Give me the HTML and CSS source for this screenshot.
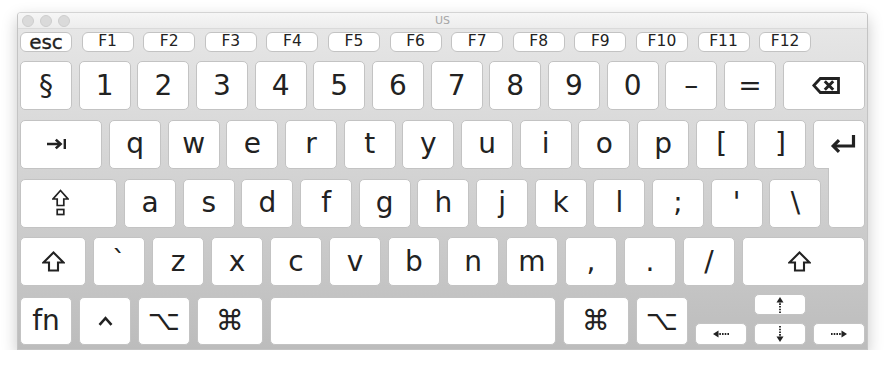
FILE: index.html
```html
<!DOCTYPE html>
<html lang="en">
<head>
    <meta charset="UTF-8">
    <title>US</title>
    <link rel="stylesheet" href="styles.css">
</head>
<body>
    <div class="window">
        <div class="titlebar">
            <div class="lights"><span></span><span></span><span></span></div>
            <div class="title">US</div>
            <div></div>
        </div>

        <div class="board">
            <!-- function keys -->
            <div class="frow">
                <div class="key fkey esc">esc</div>
                <div class="key fkey">F1</div>
                <div class="key fkey">F2</div>
                <div class="key fkey">F3</div>
                <div class="key fkey">F4</div>
                <div class="key fkey">F5</div>
                <div class="key fkey">F6</div>
                <div class="key fkey">F7</div>
                <div class="key fkey">F8</div>
                <div class="key fkey">F9</div>
                <div class="key fkey">F10</div>
                <div class="key fkey">F11</div>
                <div class="key fkey">F12</div>
            </div>

            <div class="rows">
                <div class="row">
                    <div class="key">§</div>
                    <div class="key">1</div>
                    <div class="key">2</div>
                    <div class="key">3</div>
                    <div class="key">4</div>
                    <div class="key">5</div>
                    <div class="key">6</div>
                    <div class="key">7</div>
                    <div class="key">8</div>
                    <div class="key">9</div>
                    <div class="key">0</div>
                    <div class="key">–</div>
                    <div class="key">=</div>
                    <div class="key grow del">
                        <svg width="28" height="17" viewBox="0 0 28 17">
                            <path d="M1.8 8.5 L8.3 1.5 H26.5 V15.5 H8.3 Z" fill="none" stroke="#222" stroke-width="2.8" stroke-linejoin="miter"/>
                            <path d="M12.8 4.3 L21.2 12.7 M21.2 4.3 L12.8 12.7" stroke="#222" stroke-width="3"/>
                        </svg>
                    </div>
                </div>

                <div class="row">
                    <div class="key grow tab">
                        <svg width="21" height="12" viewBox="0 0 21 12">
                            <path d="M1 6 H14" stroke="#222" stroke-width="2.4"/>
                            <path d="M9.8 1.6 L14.6 6 L9.8 10.4" fill="none" stroke="#222" stroke-width="2.6"/>
                            <rect x="17.6" y="1" width="2.4" height="10" fill="#222"/>
                        </svg>
                    </div>
                    <div class="key">q</div>
                    <div class="key">w</div>
                    <div class="key">e</div>
                    <div class="key">r</div>
                    <div class="key">t</div>
                    <div class="key">y</div>
                    <div class="key">u</div>
                    <div class="key">i</div>
                    <div class="key">o</div>
                    <div class="key">p</div>
                    <div class="key">[</div>
                    <div class="key">]</div>
                    <div class="key ret-top">
                        <svg width="27" height="20" viewBox="0 0 27 20">
                            <path d="M24.5 1 V12 H5" fill="none" stroke="#222" stroke-width="3.2"/>
                            <path d="M10 6.2 L4.2 12 L10 17.8" fill="none" stroke="#222" stroke-width="3.2"/>
                        </svg>
                    </div>
                </div>

                <div class="row">
                    <div class="key grow caps">
                        <svg width="17" height="28" viewBox="0 0 17 28">
                            <path d="M8.5 1.5 L16 10 H11.8 V16.5 H5.2 V10 H1 Z" fill="none" stroke="#222" stroke-width="1.7" stroke-linejoin="miter"/>
                            <rect x="5.2" y="20.5" width="6.6" height="5" fill="none" stroke="#222" stroke-width="1.7"/>
                        </svg>
                    </div>
                    <div class="key">a</div>
                    <div class="key">s</div>
                    <div class="key">d</div>
                    <div class="key">f</div>
                    <div class="key">g</div>
                    <div class="key">h</div>
                    <div class="key">j</div>
                    <div class="key">k</div>
                    <div class="key">l</div>
                    <div class="key">;</div>
                    <div class="key">'</div>
                    <div class="key">\</div>
                    <div class="key ret-bottom"></div>
                </div>

                <div class="row shift-row">
                    <div class="key lshift">
                        <svg width="23" height="21" viewBox="0 0 23 21">
                            <path d="M11.5 1.5 L21.5 11.5 H16 V19.5 H7 V11.5 H1.5 Z" fill="none" stroke="#222" stroke-width="2.1" stroke-linejoin="miter"/>
                        </svg>
                    </div>
                    <div class="key">`</div>
                    <div class="key">z</div>
                    <div class="key">x</div>
                    <div class="key">c</div>
                    <div class="key">v</div>
                    <div class="key">b</div>
                    <div class="key">n</div>
                    <div class="key">m</div>
                    <div class="key">,</div>
                    <div class="key">.</div>
                    <div class="key">/</div>
                    <div class="key grow rshift">
                        <svg width="23" height="21" viewBox="0 0 23 21">
                            <path d="M11.5 1.5 L21.5 11.5 H16 V19.5 H7 V11.5 H1.5 Z" fill="none" stroke="#222" stroke-width="2.1" stroke-linejoin="miter"/>
                        </svg>
                    </div>
                </div>

                <div class="row bottom-row">
                    <div class="key">fn</div>
                    <div class="key">
                        <svg width="15" height="10" viewBox="0 0 15 10">
                            <path d="M1.5 8.8 L7.5 2.2 L13.5 8.8" fill="none" stroke="#222" stroke-width="2.6"/>
                        </svg>
                    </div>
                    <div class="key sym">⌥</div>
                    <div class="key cmd sym">⌘</div>
                    <div class="key grow"></div>
                    <div class="key cmd sym">⌘</div>
                    <div class="key sym">⌥</div>
                    <div class="key arrow">
                        <svg width="16" height="8" viewBox="0 0 16 8">
                            <path d="M16 4 H5" stroke="#222" stroke-width="1.8" stroke-dasharray="1.6 1.1"/>
                            <path d="M0 4 L5.5 0.5 V7.5 Z" fill="#222"/>
                        </svg>
                    </div>
                    <div class="arrows-mid">
                        <div class="key arrow">
                            <svg width="8" height="16" viewBox="0 0 8 16">
                                <path d="M4 16 V5" stroke="#222" stroke-width="1.8" stroke-dasharray="1.6 1.1"/>
                                <path d="M4 0 L7.5 5.5 H0.5 Z" fill="#222"/>
                            </svg>
                        </div>
                        <div class="key arrow">
                            <svg width="8" height="16" viewBox="0 0 8 16">
                                <path d="M4 0 V11" stroke="#222" stroke-width="1.8" stroke-dasharray="1.6 1.1"/>
                                <path d="M4 16 L7.5 10.5 H0.5 Z" fill="#222"/>
                            </svg>
                        </div>
                    </div>
                    <div class="key arrow">
                        <svg width="16" height="8" viewBox="0 0 16 8">
                            <path d="M0 4 H11" stroke="#222" stroke-width="1.8" stroke-dasharray="1.6 1.1"/>
                            <path d="M16 4 L10.5 0.5 V7.5 Z" fill="#222"/>
                        </svg>
                    </div>
                </div>
            </div>
        </div>
    </div>
</body>
</html>
```

FILE: styles.css
```css
body {
    margin: 0;
    background-color: #fff;
    font-family: "DejaVu Sans", sans-serif;
    color: #222;
}

.window {
    width: 851px;
    height: 338px;
    margin: 12px 0 0 17px;
    box-sizing: border-box;
    border: 1px solid #c4c4c4;
    border-top-color: #d4d4d4;
    border-radius: 4px 4px 0 0;
    box-shadow: 0 6px 16px rgba(0, 0, 0, 0.22);
    display: flex;
    flex-direction: column;
    overflow: hidden;
}

.titlebar {
    height: 16px;
    background: linear-gradient(#f6f6f6, #ededed);
    border-bottom: 1px solid #dadada;
    display: grid;
    grid-template-columns: 1fr auto 1fr;
    align-items: center;
}

.lights {
    display: flex;
    gap: 6px;
    padding-left: 4px;
}

.lights span {
    width: 12px;
    height: 12px;
    border-radius: 50%;
    background-color: #dadada;
    border: 1px solid #cdcdcd;
    box-sizing: border-box;
}

.title {
    font-size: 11px;
    color: #a6a6a6;
}

.board {
    flex: 1;
    padding: 3px 2px 4px 2px;
    background: linear-gradient(#e6e6e6, #bcbcbc);
}

.frow {
    display: flex;
    gap: 9.6px;
    height: 20px;
    margin-bottom: 9px;
}

.rows {
    display: flex;
    flex-direction: column;
    gap: 9.75px;
}

.row {
    display: flex;
    gap: 6.67px;
    height: 49px;
}

.key {
    width: 52px;
    flex-shrink: 0;
    box-sizing: border-box;
    background-color: #fff;
    border: 1px solid #c3c3c3;
    border-radius: 5px;
    display: flex;
    align-items: center;
    justify-content: center;
    font-size: 28px;
    line-height: 1;
}

.fkey {
    font-size: 15.5px;
    border-radius: 6px;
}

.esc {
    font-size: 20px;
    -webkit-text-stroke: 0.3px #222;
}

.grow {
    flex: 1;
}

.sym {
    font-size: 28px;
}

/* glyphs that sit a little off centre */
.tab {
    padding-right: 9px;
}

.caps {
    padding-right: 17px;
}

.rshift {
    padding-right: 8px;
}

.del {
    padding-left: 5px;
}

.ret-top {
    border-bottom-right-radius: 0;
    padding-left: 6px;
}

.ret-bottom {
    width: 37px;
    height: 60px;
    margin-top: -11px;
    align-self: flex-start;
    border-top: none;
    border-radius: 0 0 5px 5px;
    position: relative;
    z-index: 1;
}

.shift-row {
    gap: 7px;
}

.lshift {
    width: 66px;
}

.bottom-row {
    gap: 7px;
    height: 48px;
    margin-top: 1px;
}

.cmd {
    width: 66px;
}

.arrow {
    height: 22px;
    align-self: flex-end;
}

.arrows-mid {
    width: 52px;
    margin-top: -3px;
    display: flex;
    flex-direction: column;
    justify-content: space-between;
}

.arrows-mid .arrow:first-child {
    height: 21px;
}
```
